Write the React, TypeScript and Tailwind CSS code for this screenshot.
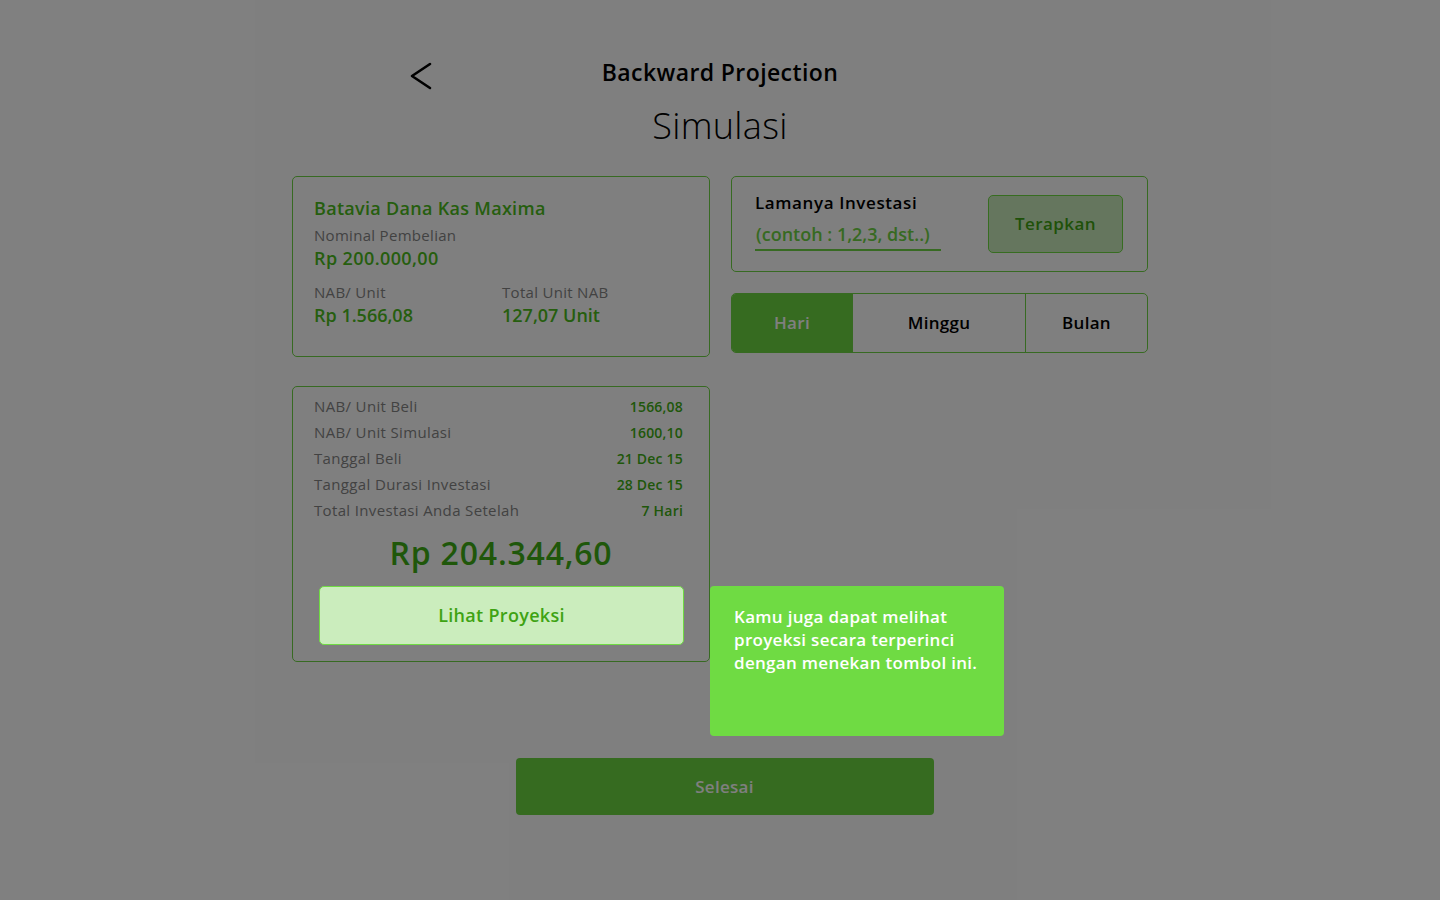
import React from "react";

const rows = [
  { label: "NAB/ Unit Beli", value: "1566,08" },
  { label: "NAB/ Unit Simulasi", value: "1600,10" },
  { label: "Tanggal Beli", value: "21 Dec 15" },
  { label: "Tanggal Durasi Investasi", value: "28 Dec 15" },
  { label: "Total Investasi Anda Setelah", value: "7 Hari" },
];

export default function App() {
  return (
    <div
      className="relative min-h-[900px] w-full bg-white"
      style={{ fontFamily: '"Open Sans", "Noto Sans", sans-serif' }}
    >
      {/* dimmed backdrop of the coach mark */}
      <div className="absolute inset-0 z-10 bg-black/50"></div>

      <div className="mx-auto flex w-[856px] flex-col pt-[54px]">
        {/* Header */}
        <div className="grid h-[32px] grid-cols-[1fr_auto_1fr] items-center">
          <div className="pl-[117px]">
            <svg width="26" height="28" viewBox="0 0 26 28" fill="none" className="mt-[8px]">
              <path d="M21 2L3 14L21 26" stroke="#000" strokeWidth="2.6" strokeLinecap="round" strokeLinejoin="round" />
            </svg>
          </div>
          <h1 className="text-[23px] font-semibold leading-[32px] tracking-[0.4px] text-black">Backward Projection</h1>
          <div></div>
        </div>
        <h2 className="mt-[18px] text-center text-[36px] font-light leading-[44px] tracking-[0.3px] text-black">Simulasi</h2>

        <div className="mt-[28px] grid grid-cols-[418px_417px] gap-[21px]">
          {/* Left column */}
          <div className="flex flex-col gap-[29px]">
            <div className="h-[181px] rounded-[5px] border border-[#6fd444] px-[21px] pt-[19px]">
              <div className="text-[18px] font-semibold leading-[24px] tracking-[0.3px] text-[#4cbd1c]">Batavia Dana Kas Maxima</div>
              <div className="mt-[5px] text-[15px] leading-[20px] tracking-[0.3px] text-[#858585]">Nominal Pembelian</div>
              <div className="mt-[1px] text-[18px] font-semibold leading-[24px] tracking-[0.4px] text-[#4cbd1c]">Rp 200.000,00</div>
              <div className="mt-[12px] grid grid-cols-[188px_1fr]">
                <div>
                  <div className="text-[15px] leading-[20px] tracking-[0.3px] text-[#858585]">NAB/ Unit</div>
                  <div className="mt-[1px] text-[18px] font-semibold leading-[24px] text-[#4cbd1c]">Rp 1.566,08</div>
                </div>
                <div>
                  <div className="text-[15px] leading-[20px] tracking-[0.3px] text-[#858585]">Total Unit NAB</div>
                  <div className="mt-[1px] text-[18px] font-semibold leading-[24px] text-[#4cbd1c]">127,07 Unit</div>
                </div>
              </div>
            </div>

            <div className="h-[276px] rounded-[5px] border border-[#6fd444] pt-[6px] pb-[16px]">
              <div className="pl-[21px] pr-[26px]">
                {rows.map((r) => (
                  <div key={r.label} className="flex h-[26px] items-center justify-between">
                    <span className="text-[15px] tracking-[0.35px] text-[#858585]">{r.label}</span>
                    <span className="text-[14px] font-semibold tracking-[0.2px] text-[#3fae14]">{r.value}</span>
                  </div>
                ))}
              </div>
              <div className="mt-[10px] text-center text-[32px] font-semibold leading-[40px] tracking-[0.8px] text-[#3fae14]">
                Rp 204.344,60
              </div>
              <div className="relative z-20 ml-[26px] mt-[13px] w-[365px]">
                <button className="flex h-[59px] w-full items-center justify-center rounded-[5px] border border-[#6fdb43] bg-[#cbedbd] text-[18px] font-semibold tracking-[0.3px] text-[#3ea313]">
                  Lihat Proyeksi
                </button>
                <div className="absolute left-[calc(100%+26px)] top-0 h-[150px] w-[294px] rounded-[4px] bg-[#6fdb43] px-[24px] pt-[19px] text-[17px] font-semibold leading-[23px] tracking-[0.3px] text-white">
                  Kamu juga dapat melihat proyeksi secara terperinci dengan menekan tombol ini.
                </div>
              </div>
            </div>
          </div>

          {/* Right column */}
          <div className="flex flex-col gap-[21px]">
            <div className="flex h-[96px] items-center justify-between rounded-[5px] border border-[#6fd444] pl-[23px] pr-[24px]">
              <div className="mb-[6px] flex flex-col">
                <div className="text-[17px] font-semibold leading-[22px] tracking-[0.6px] text-black">Lamanya Investasi</div>
                <div className="mt-[8px] w-[186px] border-b-2 border-[#6fd444] pb-[3px] pl-[1px] text-[18px] font-semibold leading-[24px] text-[#6fd444]">
                  (contoh : 1,2,3, dst..)
                </div>
              </div>
              <button className="h-[58px] w-[135px] rounded-[5px] border border-[#6fdb43] bg-[#cbedbd] text-[17px] font-semibold tracking-[0.4px] text-[#3ea313]">
                Terapkan
              </button>
            </div>

            <div className="flex h-[60px] overflow-hidden rounded-[5px] border border-[#6fd444]">
              <div className="flex w-[120px] items-center justify-center bg-[#6cd641] text-[17px] font-semibold tracking-[0.3px] text-white">Hari</div>
              <div className="flex w-[173px] items-center justify-center border-l border-[#6fd444] text-[17px] font-semibold tracking-[0.3px] text-black">Minggu</div>
              <div className="flex flex-1 items-center justify-center border-l border-[#6fd444] text-[17px] font-semibold tracking-[0.3px] text-black">Bulan</div>
            </div>
          </div>
        </div>

        <div className="mt-[96px] flex justify-center pl-[9px]">
          <button className="h-[57px] w-[418px] rounded-[4px] bg-[#6cd641] text-[17px] font-semibold tracking-[0.3px] text-white">Selesai</button>
        </div>
      </div>
    </div>
  );
}
